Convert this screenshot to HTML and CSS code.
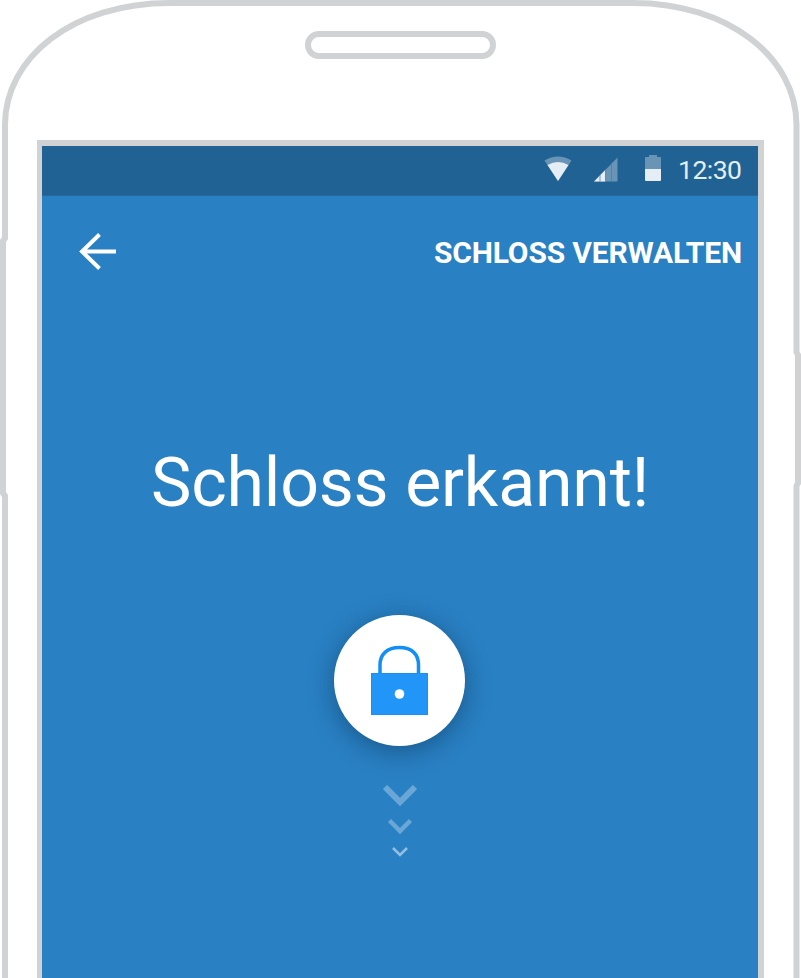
FILE: index.html
```
<!DOCTYPE html>
<html lang="de">
<head>
<meta charset="utf-8">
<title>Schloss erkannt</title>
<link rel="stylesheet" href="styles.css">
</head>
<body>
<div class="phone">
  <svg class="shell" width="801" height="978" viewBox="0 0 801 978" fill="none" stroke="#d0d2d3" stroke-width="6">
    <path d="M5 978V496L3 493V241L5 238V125C5 58 72 3 170 3H633C729 3 796.5 58 796.5 125V352L798 355V483L796.5 486V978"/>
  </svg>
  <div class="speaker"></div>
  <main class="screen">
    <header class="status">
      <svg class="wifi" width="28" height="26" viewBox="0 0 28 26"><path d="M.5 4.500Q14-3.500 27.500 4.500L14 25Z" fill="#6994b6"/><path d="M3.500 9Q14 3 24.500 9L14 25Z" fill="#e6eef5"/></svg>
      <svg class="signal" width="24" height="25" viewBox="0 0 24 25"><path d="M0 24.500L23.500 .5V24.500Z" fill="#6994b6"/><path d="M0 24.500L11.500 12.700V24.500Z" fill="#e6eef5"/><path d="M6 18V24.500M11.500 12V24.500M17.500 6V24.500" stroke="#4c7fa6" stroke-width=".8"/></svg>
      <svg class="battery" width="16" height="26" viewBox="0 0 16 26"><path d="M4 0H12V2H15Q16 2 16 3V14H0V3Q0 2 1 2H4Z" fill="#6994b6"/><path d="M0 14H16V25Q16 26 15 26H1Q0 26 0 25Z" fill="#e6eef5"/></svg>
      <span class="clock">12:30</span>
    </header>
    <nav class="toolbar">
      <svg width="37" height="38" viewBox="0 0 37 38" fill="none" stroke="#fff" stroke-width="4"><path d="M20.500 1.500L3 18.500L20.500 35.500M3 18.500H37"/></svg>
      <span class="manage">SCHLOSS VERWALTEN</span>
    </nav>
    <h1>Schloss erkannt!</h1>
    <div class="lock">
      <svg width="57" height="72" viewBox="0 0 57 72"><path d="M9 30V20C9 9 16.500 2.500 28.500 2.500S47.500 9 47.500 20V30" fill="none" stroke="#118ff7" stroke-width="3.500"/><rect x=".5" y="28.500" width="56" height="41" fill="#2196f8" stroke="#1990f3"/><circle cx="28.500" cy="49" r="4.800" fill="#fff"/></svg>
    </div>
    <svg class="arrows" width="34" height="74" viewBox="0 0 34 74" fill="none"><path d="M2 2L17 17L32 2" stroke="#6aa7d6" stroke-width="6"/><path d="M6.500 35.500L17 46L27.500 35.500" stroke="#6aa7d6" stroke-width="4.500"/><path d="M10 63L17 70L24 63" stroke="#94bfe1" stroke-width="2.500"/></svg>
  </main>
</div>
</body>
</html>
```
FILE: styles.css
```
body {
  margin: 0;
  background: #fff;
  font-family: Roboto, sans-serif;
  color: #fff;
}
.phone {
  position: relative;
  box-sizing: border-box;
  width: 801px;
  height: 978px;
  padding: 31px 37px 0;
  overflow: hidden;
}
.shell {
  position: absolute;
  inset: 0;
}
.speaker {
  box-sizing: border-box;
  width: 191px;
  height: 28px;
  margin-left: 268px;
  border: 6px solid #d0d2d3;
  border-radius: 14px;
}
.screen {
  display: flex;
  flex-direction: column;
  align-items: center;
  width: 716px;
  height: 832px;
  margin-top: 81px;
  border: solid #d0d2d3;
  border-width: 6px 6px 0 5px;
  background: #2980c3;
}
.status {
  display: flex;
  align-items: flex-start;
  justify-content: flex-end;
  box-sizing: border-box;
  width: 100%;
  height: 50px;
  padding: 9px 16px 0 0;
  background: #206294;
  border-bottom: 1px solid #23699f;
}
.wifi {
  margin: 1px 22px 0 0;
}
.signal {
  margin: 2px 27px 0 0;
}
.battery {
  margin-right: 17px;
}
.clock {
  width: 64px;
  margin-top: -1px;
  font-size: 26.500px;
  line-height: 32px;
  letter-spacing: -.5px;
  white-space: nowrap;
  color: #e6eef5;
}
.toolbar {
  display: flex;
  align-items: center;
  justify-content: space-between;
  box-sizing: border-box;
  width: 100%;
  height: 111px;
  padding: 0 16px 0 37px;
}
.manage {
  margin-top: 2px;
  font-size: 30px;
  font-weight: 700;
  line-height: 36px;
  letter-spacing: -.15px;
}
h1 {
  margin: 134px 0 0;
  font-size: 68px;
  font-weight: 400;
  line-height: 84px;
  letter-spacing: -.2px;
  white-space: nowrap;
}
.lock {
  display: flex;
  justify-content: center;
  width: 131px;
  height: 101px;
  padding-top: 30px;
  margin: 90px 1px 0 0;
  border-radius: 50%;
  background: #fff;
  box-shadow: 0 5px 26px rgba(0, 30, 60, .42);
}
.arrows {
  margin: 39px 1px 0 0;
}
```
